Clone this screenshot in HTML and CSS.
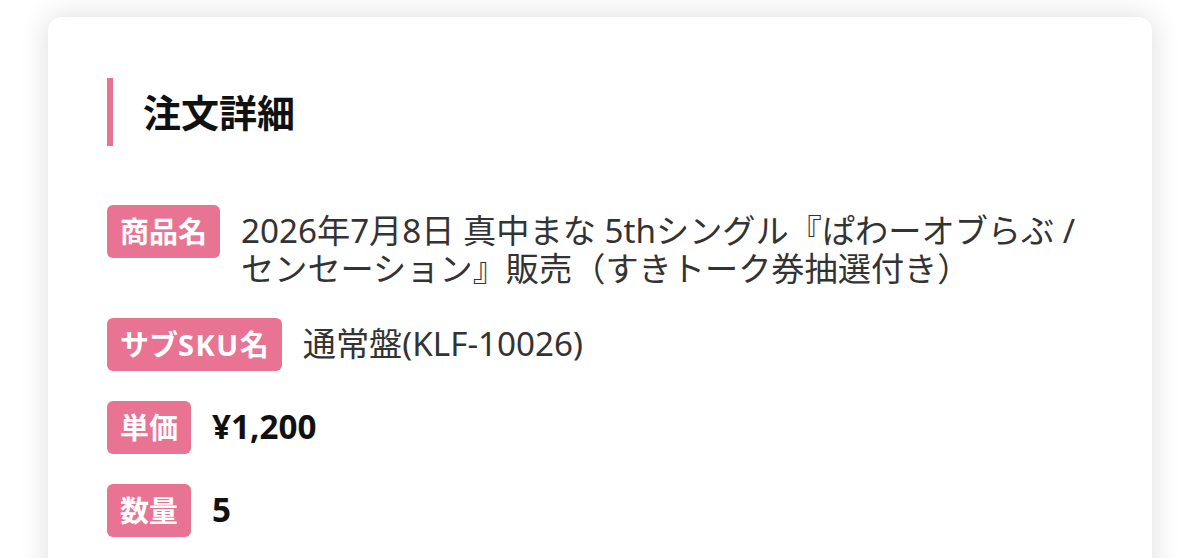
FILE: index.html
```html
<!DOCTYPE html>
<html lang="ja">
<head>
<meta charset="utf-8">
<title>注文詳細</title>
<link rel="stylesheet" href="styles.css">
</head>
<body>
<main class="card">
  <h2 class="section-title">注文詳細</h2>
  <dl class="details">
    <div class="row">
      <dt class="badge">商品名</dt>
      <dd class="value">2026年7月8日 真中まな 5thシングル『ぱわーオブらぶ / センセーション』販売（すきトーク券抽選付き）</dd>
    </div>
    <div class="row">
      <dt class="badge">サブ<span class="badge-latin">SKU</span>名</dt>
      <dd class="value">通常盤(KLF-10026)</dd>
    </div>
    <div class="row">
      <dt class="badge">単価</dt>
      <dd class="value value-strong">¥1,200</dd>
    </div>
    <div class="row">
      <dt class="badge">数量</dt>
      <dd class="value value-strong">5</dd>
    </div>
  </dl>
</main>
</body>
</html>
```

FILE: styles.css
```css
html, body {
  margin: 0;
  padding: 0;
  background: #ffffff;
}

body {
  font-family: "Noto Sans", "Noto Sans CJK JP", sans-serif;
  color: #333333;
  padding: 17px 48px 0;
  overflow: hidden;
}

.card {
  background: #ffffff;
  border-radius: 14px;
  box-shadow: 0 0 30px rgba(0, 0, 0, 0.14);
  padding: 61px 59px 80px;
  min-height: 600px;
}

.section-title {
  margin: 0;
  border-left: 6px solid #e97393;
  padding-left: 30px;
  font-size: 38px;
  line-height: 68px;
  font-weight: 700;
  color: #111111;
}

.details {
  margin: 59px 0 0;
  display: flex;
  flex-direction: column;
  gap: 30px;
}

.row {
  display: flex;
  align-items: flex-start;
  gap: 21px;
}

.badge {
  flex: none;
  height: 53px;
  padding: 0 13px;
  border-radius: 6px;
  background: #e97393;
  color: #ffffff;
  font-size: 29px;
  font-weight: 700;
  line-height: 53px;
}

/* Latin letters inside a label run a touch wider than the kana around them */
.badge-latin {
  letter-spacing: 1.5px;
}

.value {
  margin: 0;
  padding-top: 7px;
  font-size: 33.2px;
  line-height: 38px;
  color: #333333;
}

.value-strong {
  font-weight: 700;
  color: #111111;
}
```
